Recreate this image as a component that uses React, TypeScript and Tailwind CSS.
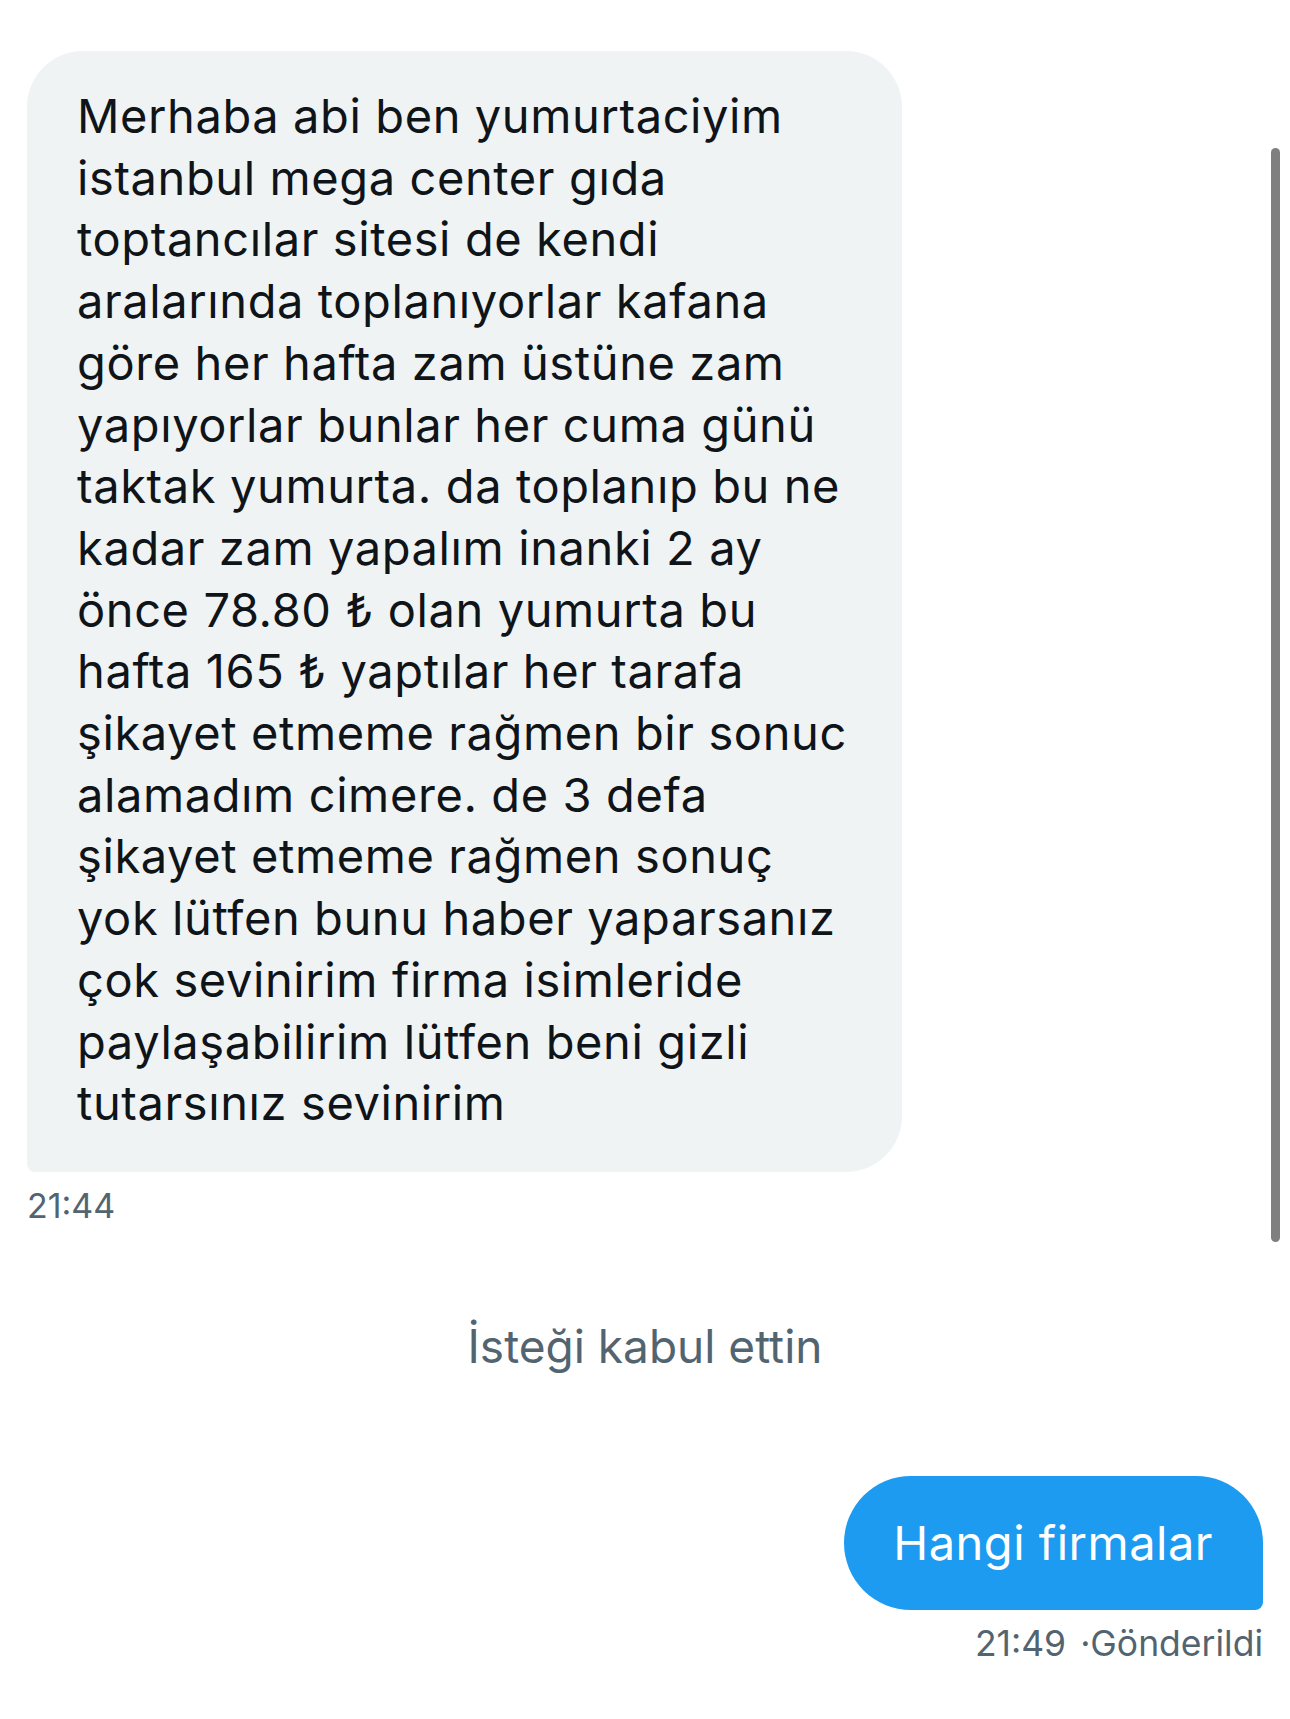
const LINES = [
  "Merhaba abi ben yumurtaciyim",
  "istanbul mega center gıda",
  "toptancılar sitesi de kendi",
  "aralarında toplanıyorlar kafana",
  "göre her hafta zam üstüne zam",
  "yapıyorlar bunlar her cuma günü",
  "taktak yumurta. da toplanıp bu ne",
  "kadar zam yapalım inanki 2 ay",
  "önce 78.80 ₺ olan yumurta bu",
  "hafta 165 ₺ yaptılar her tarafa",
  "şikayet etmeme rağmen bir sonuc",
  "alamadım cimere. de 3 defa",
  "şikayet etmeme rağmen sonuç",
  "yok lütfen bunu haber yaparsanız",
  "çok sevinirim firma isimleride",
  "paylaşabilirim lütfen beni gizli",
  "tutarsınız sevinirim",
];

export default function App() {
  return (
    <div className="relative min-h-[1719px] w-[1290px] bg-white font-['Inter',sans-serif]">
      {/* scrollbar */}
      <div className="absolute left-[1271px] top-[148px] h-[1094px] w-[9px] rounded-full bg-[#7f7f7f]" />

      <div className="flex flex-col pl-[27px] pr-[27px] pt-[51px]">
        {/* incoming message */}
        <div className="w-[875px] rounded-[56px] rounded-bl-[8px] bg-[#eff3f4] pb-[38px] pl-[50px] pr-[30px] pt-[34px] text-[47px] leading-[61.7px] tracking-[0.6px] text-[#0f1419]">
          {LINES.map((l) => (
            <div key={l} className="whitespace-nowrap">
              {l}
            </div>
          ))}
        </div>
        <div className="mt-[14px] text-[34px] leading-[40px] text-[#536471]">21:44</div>

        {/* system notice */}
        <div className="mt-[92px] text-center text-[46px] leading-[56px] text-[#536471]">
          İsteği kabul ettin
        </div>

        {/* outgoing message */}
        <div className="mt-[102px] flex justify-end">
          <div className="flex h-[134px] items-center rounded-[67px] rounded-br-[8px] bg-[#1d9bf0] pl-[49px] pr-[50px] text-[47px] tracking-[0.5px] text-white">
            Hangi firmalar
          </div>
        </div>
        <div className="mt-[14px] flex justify-end gap-[14px] text-[35.5px] leading-[40px] text-[#536471]">
          <span>21:49</span>
          <span>·Gönderildi</span>
        </div>
      </div>
    </div>
  );
}
